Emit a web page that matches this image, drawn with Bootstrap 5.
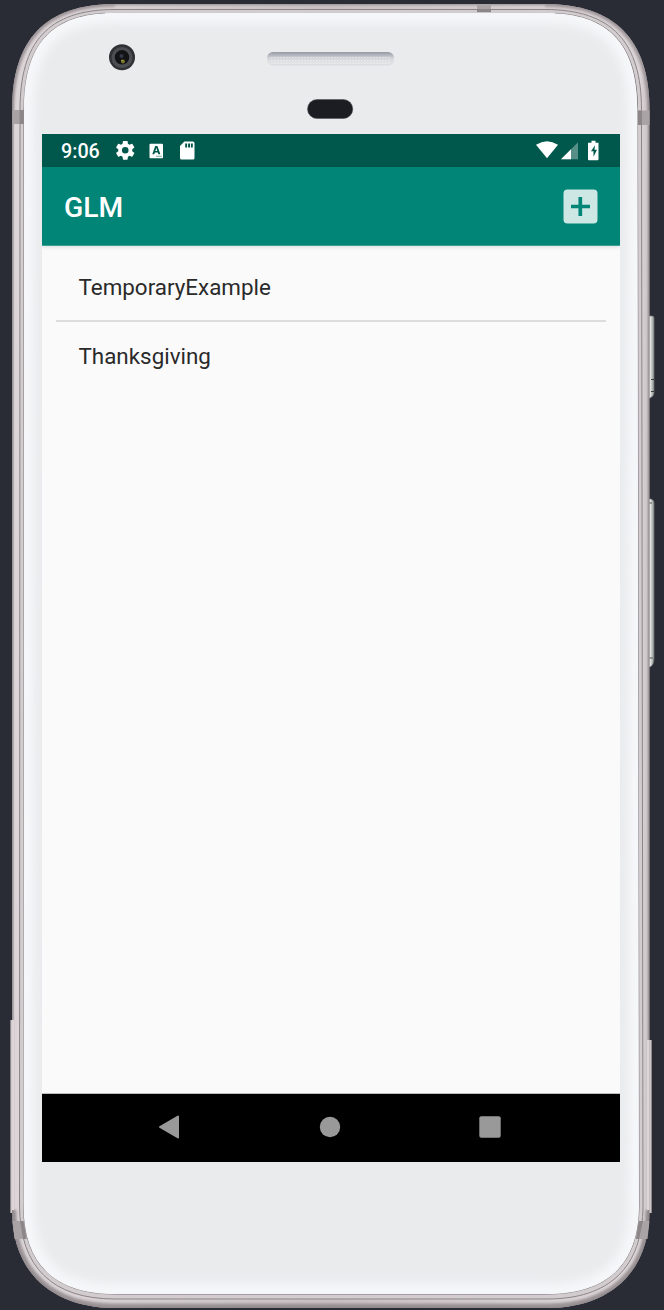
<!DOCTYPE html>
<html lang="en">
<head>
<meta charset="utf-8">
<meta name="viewport" content="width=device-width, initial-scale=1">
<title>GLM</title>
<link href="https://cdn.jsdelivr.net/npm/bootstrap@5.3.0/dist/css/bootstrap.min.css" rel="stylesheet">
<style>
body { background: #292c35; font-family: Roboto, "Liberation Sans", sans-serif; }
svg { display: block; flex: none; }
.device { width: 664px; height: 1310px; padding: 134px 44px 148px 42px; }
.shell { z-index: 0; }
.screen { z-index: 1; background: #fafafa; }
.status { height: 33px; background: #00574b; padding: 0 20px 0 19px; font-size: 19.7px; font-weight: 500; line-height: 33px; }
.clock { padding-top: 1px; }
.notices { padding-left: 14px; }
.appbar { height: 79px; background: #008577; padding: 0 22.5px 0 22px; border-bottom: 1px solid #3da195; box-shadow: 0 1px 4px rgba(0,0,0,.12); }
.title-text { font-size: 28.2px; font-weight: 500; line-height: 1; padding-top: 4px; }
.lists { padding: 6px 14px 0; }
.lists .list-group-item { height: 69px; padding: 3px 22.5px 0; background: transparent; color: #2a2a2a; font-size: 22.4px; border-color: #dcdcdc; }
.lists .list-group-item:first-child { border-bottom-width: 2px; height: 70px; }
.lists .list-group-item:last-child { padding-top: 1px; }
.softkeys { height: 69px; background: #000; border-top: 1px solid #bdbdbd; padding: 0 119px 2px 116px; }
</style>
</head>
<body>
<main class="device position-relative overflow-hidden">
  <svg class="shell position-absolute top-0 start-0" width="664" height="1310" viewBox="0 0 664 1310" aria-hidden="true">
    <defs>
      <linearGradient id="rim" x2="1" y2="0">
        <stop offset="0" stop-color="#a59fa2"/><stop offset=".004" stop-color="#dcd4d7"/><stop offset=".012" stop-color="#ddd6d9"/>
        <stop offset=".5" stop-color="#c8c0c3"/><stop offset=".985" stop-color="#ddd6d9"/><stop offset=".996" stop-color="#cec6c9"/><stop offset="1" stop-color="#a59fa2"/>
      </linearGradient>
      <linearGradient id="key" x2="1" y2="0"><stop offset="0" stop-color="#a1a4a2"/><stop offset=".5" stop-color="#dfe3df"/><stop offset="1" stop-color="#8b8f8e"/></linearGradient>
      <linearGradient id="speaker" x2="0" y2="1"><stop offset="0" stop-color="#9699a3"/><stop offset=".3" stop-color="#b8bac3"/><stop offset=".5" stop-color="#d4d5da"/><stop offset="1" stop-color="#e7e8ea"/></linearGradient>
      <filter id="soft" x="-10%" y="-10%" width="120%" height="120%"><feGaussianBlur stdDeviation="5"/></filter>
      <filter id="edge" x="-10%" y="-10%" width="120%" height="120%"><feGaussianBlur stdDeviation="1.2"/></filter>
      <path id="outer" d="M12 110C12 40 45 4 115 4H545C615 4 649.500 40 649.500 110V1210C649.500 1275 607 1308 547 1308H115C55 1308 12 1275 12 1210Z"/>
      <path id="face" d="M24 110C24 45 50 13 115 13H545C610 13 637.500 45 637.500 110L639 1205C639 1265 607 1294 547 1294H115C55 1294 23.500 1265 23.500 1205Z"/>
      <clipPath id="outerClip"><use href="#outer"/></clipPath>
      <clipPath id="faceClip"><use href="#face"/></clipPath>
    </defs>
    <!-- side buttons -->
    <path d="M647 316h5q2 0 2 2v75q0 3-4 5h-3z" fill="url(#key)" stroke="#777b7b" stroke-width=".7"/>
    <path d="M651 379.500h3m-3 12h3" stroke="#3b3e42"/>
    <path d="M647 499h4q3 1 3 4v155q0 7-4 9h-3z" fill="url(#key)" stroke="#777b7b" stroke-width=".7"/>
    <path d="M649 503h3m-3 155h4" stroke="#55595a"/>
    <!-- lower side bulges -->
    <path d="M13 1020h-2.500v193H14z" fill="#cfc8ca"/><path d="M10.500 1020v193" stroke="#8e888b"/>
    <path d="M649 1040h2.800v173H648z" fill="#cfc8ca"/><path d="M651.500 1040v173" stroke="#8e888b"/>
    <!-- metal rim -->
    <use href="#outer" fill="url(#rim)"/>
    <g clip-path="url(#outerClip)">
      <use href="#outer" fill="none" stroke="#8f878a" stroke-width="2" filter="url(#edge)"/>
      <path d="M13 1210C13 1275 55 1307 115 1307H547C607 1307 649 1275 649 1210" fill="none" stroke="#8b8386" stroke-width="7" filter="url(#edge)" opacity=".75"/>
      <path d="M11 115C11 40 45 4 115 4M545 4C615 4 650 40 650 115" fill="none" stroke="#958c90" stroke-width="6" filter="url(#edge)" opacity=".55"/>
      <path d="M12 1020v190M649 1040v170" stroke="#ddd6d8" stroke-width="4"/>
    </g>
    <path d="M20 110C20 42 48 9.500 115 9.500H545C612 9.500 641.500 42 641.500 110L643 1205C643 1268 609 1299 547 1299H115C53 1299 19.500 1268 19.500 1205Z" fill="#d2cccf" stroke="#8b8588" stroke-width="1"/>
    <g fill="#aaa3a6">
      <path d="M12.500 110h11v14h-11zM638 110.500h11.500v14.500H638zM477 5h14v7.500h-14zM12.500 1221H23.500l3 18H14.500zM639 1221h10.500l-2 18H636z"/>
      <path d="M19.500 110h4v14h-4zM638 110.500h4v14.500h-4zM477 9h14v3.500h-14zM20 1221h3.500l3 18H23zM639 1221h4l-4 18h-3z" fill="#8c8689"/>
    </g>
    <!-- front face -->
    <use href="#face" fill="#eaebed" stroke="#777376" stroke-width="1"/>
    <path d="M105 13H555" stroke="#dedbdd" stroke-width="1.500"/>
    <g clip-path="url(#faceClip)"><use href="#face" fill="none" stroke="#f6f7f9" stroke-width="20" filter="url(#soft)"/></g>
    <!-- camera -->
    <circle cx="122" cy="57.300" r="13" fill="#2f3134"/><circle cx="122" cy="57.500" r="10.500" fill="#4b4e52"/>
    <circle cx="122" cy="57.300" r="7.200" fill="#111315"/><circle cx="121.500" cy="56" r="2" fill="#34364a"/><circle cx="123" cy="61.500" r="2" fill="#77752c"/><circle cx="122" cy="60.500" r=".8" fill="#b5ad48"/>
    <!-- speaker and sensor -->
    <rect x="267" y="53" width="127" height="12.500" rx="6" fill="#dddee1"/>
    <rect x="267" y="52" width="127" height="12" rx="6" fill="url(#speaker)"/>
    <path d="M271 57.500H390M271 60.500H390" stroke="#f0f0f2" stroke-width="1" stroke-dasharray="1.500 1.500" opacity=".7"/>
    <rect x="307.500" y="99.500" width="45.300" height="19" rx="9.500" fill="#1b1d22" stroke="#53565b" stroke-width=".6"/>
  </svg>

  <section class="screen position-relative d-flex flex-column h-100 overflow-hidden">
    <div class="status d-flex align-items-center text-white">
      <span class="clock">9:06</span>
      <div class="notices d-flex align-items-center flex-grow-1">
        <svg width="22.500" height="22.500" viewBox="0 0 24 24" fill="#fff"><path fill-rule="evenodd" d="M19.430 12.980c.040-.320.070-.640.070-.980s-.030-.660-.070-.980l2.110-1.650c.190-.150.240-.420.120-.640l-2-3.460c-.120-.220-.390-.300-.610-.220l-2.490 1c-.520-.400-1.080-.730-1.690-.980l-.380-2.650C14.460 2.180 14.250 2 14 2h-4c-.250 0-.460.180-.490.420l-.380 2.650c-.610.250-1.170.590-1.690.980l-2.490-1c-.230-.090-.490 0-.610.220l-2 3.460c-.130.220-.070.490.120.640l2.110 1.650c-.040.320-.070.650-.070.980s.030.660.070.980l-2.110 1.650c-.190.150-.240.420-.120.640l2 3.460c.120.220.390.300.610.220l2.490-1c.520.400 1.080.730 1.690.980l.380 2.650c.030.240.240.420.490.420h4c.250 0 .460-.180.490-.420l.380-2.650c.610-.250 1.170-.590 1.690-.980l2.490 1c.230.090.490 0 .610-.220l2-3.460c.120-.220.070-.490-.120-.640zM12 15.500a3.500 3.500 0 1 1 0-7 3.500 3.500 0 0 1 0 7z"/></svg>
        <svg class="ms-2" width="23" height="24" viewBox="-1 -1 23 24"><rect x="4.500" y="3.700" width="13.500" height="14.500" rx="1" fill="#fff"/><path fill="#00574b" fill-rule="evenodd" d="M10.200 6h2.200l3 8.300h-2l-.6-1.800H9.900l-.6 1.800h-2zM11.300 8l-.9 3.100h1.900zM11.500 15.800h1v1h-1zM13.500 15.800h1v1h-1zM15.500 15.800h1v1h-1z"/></svg>
        <svg class="ms-2" width="24" height="24" viewBox="0 .5 24 24"><path fill="#fff" d="M9.300 3H18q1.500 0 1.500 1.500v15Q19.500 21 18 21H6.500Q5 21 5 19.500V7.500z"/><path fill="#00574b" d="M10.200 5h1.900v4h-1.900zm2.900 0H15v4h-1.900zm2.800 0h1.900v4h-1.900z"/></svg>
      </div>
      <svg width="65" height="24" viewBox="0 .7 65 24"><path fill="#fff" d="M1 6.500Q12 -.5 23 6.500L12 20z"/><path fill="#568f87" d="M43 4v17H26z"/><path fill="#fff" d="M36 11v10H26z"/><path fill="#fff" d="M56.500 2.500h4v2h3V21q0 1-1 1H54q-1 0-1-1V4.500h3.500z"/><path fill="#00574b" d="M60 7l-4 6h2.500v5.500l3.500-7h-2.500z"/></svg>
    </div>
    <header class="appbar d-flex align-items-center justify-content-between text-white">
      <span class="title-text">GLM</span>
      <svg width="35" height="35" viewBox="0 0 35 35" role="img" aria-label="Add list"><rect x=".5" y=".5" width="34" height="34" rx="4" fill="#cce7e4"/><path d="M17.300 8v19M8 17.500h19" stroke="#008577" stroke-width="3.700"/></svg>
    </header>
    <div class="lists list-group list-group-flush flex-grow-1">
      <div class="list-group-item d-flex align-items-center">TemporaryExample</div>
      <div class="list-group-item d-flex align-items-center border-0">Thanksgiving</div>
    </div>
    <nav class="softkeys d-flex align-items-center justify-content-between" aria-label="System navigation">
      <svg width="22" height="24" viewBox="0 0 22 24"><path d="M2 12L20 1.500v21z" fill="#999" stroke="#999" stroke-width="2" stroke-linejoin="round"/></svg>
      <svg width="22" height="22" viewBox="0 0 22 22"><circle cx="11" cy="11" r="10.200" fill="#999"/></svg>
      <svg width="22" height="22" viewBox="0 0 22 22"><rect x=".3" y=".3" width="21.400" height="21.400" rx="2" fill="#999"/></svg>
    </nav>
  </section>
</main>
<script src="https://cdn.jsdelivr.net/npm/bootstrap@5.3.0/dist/js/bootstrap.bundle.min.js"></script>
</body>
</html>
